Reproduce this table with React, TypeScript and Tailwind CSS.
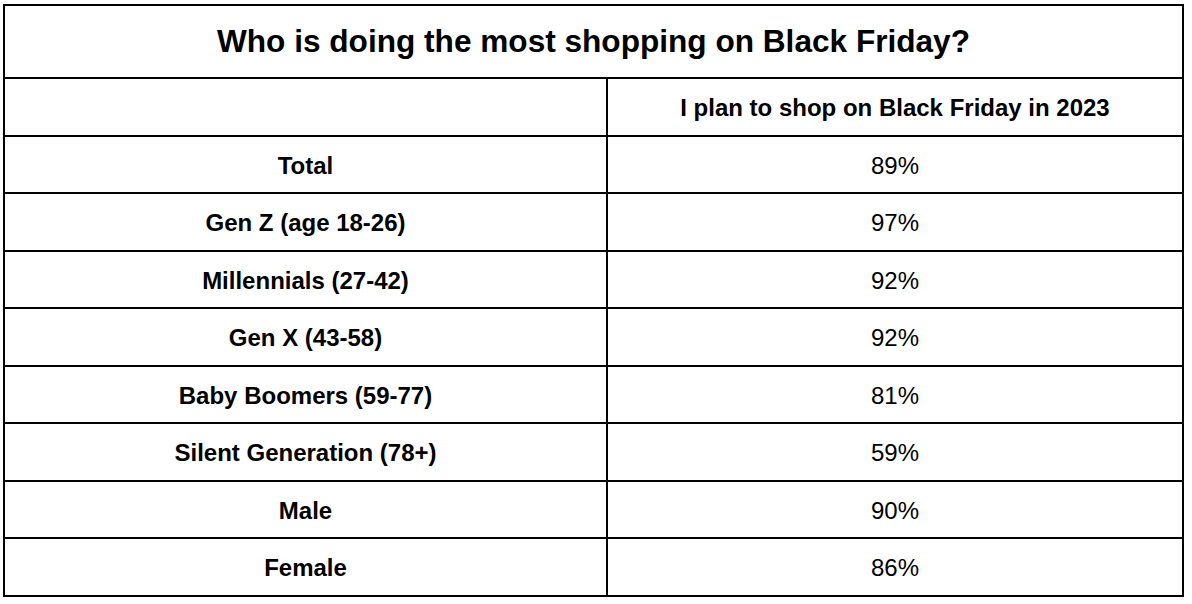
import React from 'react';

interface Row {
    label: string;
    value: string;
}

const rows: Row[] = [
    { label: 'Total', value: '89%' },
    { label: 'Gen Z (age 18-26)', value: '97%' },
    { label: 'Millennials (27-42)', value: '92%' },
    { label: 'Gen X (43-58)', value: '92%' },
    { label: 'Baby Boomers (59-77)', value: '81%' },
    { label: 'Silent Generation (78+)', value: '59%' },
    { label: 'Male', value: '90%' },
    { label: 'Female', value: '86%' },
];

const App: React.FC = () => {
    return (
        <div className="bg-white w-[1192px] h-[604px] pl-[3px] pt-[4px] text-black font-['Liberation_Sans',Arial,sans-serif]">
            <table className="w-[1181px] border-collapse table-fixed">
                <colgroup>
                    <col className="w-[603px]" />
                    <col />
                </colgroup>
                <tbody>
                    <tr className="h-[73px]">
                        <td colSpan={2} className="border-2 border-black text-center align-middle font-bold text-[31.6px] leading-none pt-[1px]">
                            Who is doing the most shopping on Black Friday?
                        </td>
                    </tr>
                    <tr className="h-[57.5px]">
                        <td className="border-2 border-black" />
                        <td className="border-2 border-black text-center align-middle font-bold text-[24px] leading-none pt-[2px]">
                            I plan to shop on Black Friday in 2023
                        </td>
                    </tr>
                    {rows.map((row) => (
                        <tr key={row.label} className="h-[57.5px]">
                            <td className="border-2 border-black text-center align-middle font-bold text-[24px] leading-none pt-[3px]">
                                {row.label}
                            </td>
                            <td className="border-2 border-black text-center align-middle text-[24px] leading-none pt-[3px]">
                                {row.value}
                            </td>
                        </tr>
                    ))}
                </tbody>
            </table>
        </div>
    );
};

export default App;
